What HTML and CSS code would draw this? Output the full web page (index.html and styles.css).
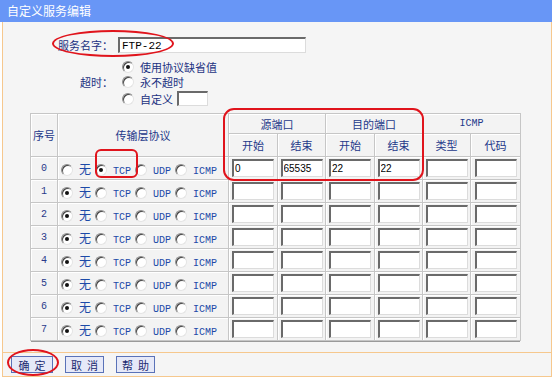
FILE: index.html
```html
<!DOCTYPE html>
<html lang="zh">
<head>
  <meta charset="UTF-8">
  <title>自定义服务编辑</title>
  <link rel="stylesheet" href="styles.css">
</head>
<body>
  <div class="window">
    <div class="title">自定义服务编辑</div>
    <div class="panel">
      <div class="form">
        <div class="name-row">
          <span class="label">服务名字：</span>
          <input type="text" class="name-input" value="FTP-22">
        </div>
        <div class="timeout">
          <span class="label timeout-label">超时：</span>
          <div class="opt opt1"><input type="radio" class="radio" name="to" checked>使用协议缺省值</div>
          <div class="opt opt2"><input type="radio" class="radio" name="to">永不超时</div>
          <div class="opt opt3"><input type="radio" class="radio" name="to">自定义 <input type="text" class="small-input"></div>
        </div>
      </div>

      <div class="table-wrap">
        <table class="svc">
          <colgroup>
            <col style="width:27px"><col style="width:171px">
            <col style="width:49px"><col style="width:48px">
            <col style="width:49px"><col style="width:48px">
            <col style="width:48px"><col style="width:50px">
          </colgroup>
          <tr class="h1">
            <th rowspan="2">序号</th>
            <th rowspan="2">传输层协议</th>
            <th colspan="2">源端口</th>
            <th colspan="2">目的端口</th>
            <th colspan="2" class="mono">ICMP</th>
          </tr>
          <tr class="h2">
            <th>开始</th><th>结束</th><th>开始</th><th>结束</th><th>类型</th><th>代码</th>
          </tr>
          <tr>
            <td class="num">0</td>
            <td class="proto"><input type="radio" class="radio" name="p0"><span class="cn">无</span><input type="radio" class="radio" name="p0" checked><span class="en">TCP</span><input type="radio" class="radio" name="p0"><span class="en">UDP</span><input type="radio" class="radio" name="p0"><span class="en">ICMP</span></td>
            <td><input type="text" class="cell-input" value="0"></td>
            <td><input type="text" class="cell-input" value="65535"></td>
            <td><input type="text" class="cell-input" value="22"></td>
            <td><input type="text" class="cell-input" value="22"></td>
            <td><input type="text" class="cell-input"></td>
            <td><input type="text" class="cell-input"></td>
          </tr>
          <tr>
            <td class="num">1</td>
            <td class="proto"><input type="radio" class="radio" name="p1" checked><span class="cn">无</span><input type="radio" class="radio" name="p1"><span class="en">TCP</span><input type="radio" class="radio" name="p1"><span class="en">UDP</span><input type="radio" class="radio" name="p1"><span class="en">ICMP</span></td>
            <td><input type="text" class="cell-input"></td><td><input type="text" class="cell-input"></td>
            <td><input type="text" class="cell-input"></td><td><input type="text" class="cell-input"></td>
            <td><input type="text" class="cell-input"></td><td><input type="text" class="cell-input"></td>
          </tr>
          <tr>
            <td class="num">2</td>
            <td class="proto"><input type="radio" class="radio" name="p2" checked><span class="cn">无</span><input type="radio" class="radio" name="p2"><span class="en">TCP</span><input type="radio" class="radio" name="p2"><span class="en">UDP</span><input type="radio" class="radio" name="p2"><span class="en">ICMP</span></td>
            <td><input type="text" class="cell-input"></td><td><input type="text" class="cell-input"></td>
            <td><input type="text" class="cell-input"></td><td><input type="text" class="cell-input"></td>
            <td><input type="text" class="cell-input"></td><td><input type="text" class="cell-input"></td>
          </tr>
          <tr>
            <td class="num">3</td>
            <td class="proto"><input type="radio" class="radio" name="p3" checked><span class="cn">无</span><input type="radio" class="radio" name="p3"><span class="en">TCP</span><input type="radio" class="radio" name="p3"><span class="en">UDP</span><input type="radio" class="radio" name="p3"><span class="en">ICMP</span></td>
            <td><input type="text" class="cell-input"></td><td><input type="text" class="cell-input"></td>
            <td><input type="text" class="cell-input"></td><td><input type="text" class="cell-input"></td>
            <td><input type="text" class="cell-input"></td><td><input type="text" class="cell-input"></td>
          </tr>
          <tr>
            <td class="num">4</td>
            <td class="proto"><input type="radio" class="radio" name="p4" checked><span class="cn">无</span><input type="radio" class="radio" name="p4"><span class="en">TCP</span><input type="radio" class="radio" name="p4"><span class="en">UDP</span><input type="radio" class="radio" name="p4"><span class="en">ICMP</span></td>
            <td><input type="text" class="cell-input"></td><td><input type="text" class="cell-input"></td>
            <td><input type="text" class="cell-input"></td><td><input type="text" class="cell-input"></td>
            <td><input type="text" class="cell-input"></td><td><input type="text" class="cell-input"></td>
          </tr>
          <tr>
            <td class="num">5</td>
            <td class="proto"><input type="radio" class="radio" name="p5" checked><span class="cn">无</span><input type="radio" class="radio" name="p5"><span class="en">TCP</span><input type="radio" class="radio" name="p5"><span class="en">UDP</span><input type="radio" class="radio" name="p5"><span class="en">ICMP</span></td>
            <td><input type="text" class="cell-input"></td><td><input type="text" class="cell-input"></td>
            <td><input type="text" class="cell-input"></td><td><input type="text" class="cell-input"></td>
            <td><input type="text" class="cell-input"></td><td><input type="text" class="cell-input"></td>
          </tr>
          <tr>
            <td class="num">6</td>
            <td class="proto"><input type="radio" class="radio" name="p6" checked><span class="cn">无</span><input type="radio" class="radio" name="p6"><span class="en">TCP</span><input type="radio" class="radio" name="p6"><span class="en">UDP</span><input type="radio" class="radio" name="p6"><span class="en">ICMP</span></td>
            <td><input type="text" class="cell-input"></td><td><input type="text" class="cell-input"></td>
            <td><input type="text" class="cell-input"></td><td><input type="text" class="cell-input"></td>
            <td><input type="text" class="cell-input"></td><td><input type="text" class="cell-input"></td>
          </tr>
          <tr>
            <td class="num">7</td>
            <td class="proto"><input type="radio" class="radio" name="p7" checked><span class="cn">无</span><input type="radio" class="radio" name="p7"><span class="en">TCP</span><input type="radio" class="radio" name="p7"><span class="en">UDP</span><input type="radio" class="radio" name="p7"><span class="en">ICMP</span></td>
            <td><input type="text" class="cell-input"></td><td><input type="text" class="cell-input"></td>
            <td><input type="text" class="cell-input"></td><td><input type="text" class="cell-input"></td>
            <td><input type="text" class="cell-input"></td><td><input type="text" class="cell-input"></td>
          </tr>
        </table>
      </div>
    </div>
    <div class="footer">
      <button class="btn btn-ok">确定</button>
      <button class="btn">取消</button>
      <button class="btn">帮助</button>
    </div>

    <!-- red annotation marks -->
    <div class="mark ellipse mark-name"></div>
    <div class="mark box mark-tcp"></div>
    <div class="mark box mark-ports"></div>
    <div class="mark ellipse mark-ok"></div>
  </div>
</body>
</html>
```

FILE: styles.css
```css
body {
  margin: 0;
  background: #fff;
  font-family: "Noto Sans CJK SC", "Liberation Sans", sans-serif;
  font-size: 11px;
  color: #1c3282;
}

.window {
  position: relative;
  width: 552px;
}

.title {
  height: 22px;
  line-height: 21px;
  padding-left: 7px;
  background: #6896f6;
  color: #fff;
  font-size: 12px;
}

.panel {
  margin-left: 2px;
  border-left: 1px solid #f6c88e;
  border-right: 1px solid #f6c88e;
  border-bottom: 1px solid #f6c88e;
  background: #f5f5f5;
  padding-top: 15px;
  padding-bottom: 11px;
}

.form {
  display: flex;
  flex-direction: column;
}

.label {
  width: 110px;
  text-align: right;
  color: #1c3282;
}

.name-row {
  display: flex;
  align-items: center;
  height: 16px;
  gap: 5px;
}

.name-input {
  box-sizing: border-box;
  width: 188px;
  height: 16px;
  margin: 0;
  padding: 0 2px;
  background: #fff;
  border-top: 2px solid #6a6a6a;
  border-left: 2px solid #6a6a6a;
  border-right: 1px solid #dcdcdc;
  border-bottom: 1px solid #dcdcdc;
  font-family: "Liberation Mono", monospace;
  font-size: 11px;
  color: #000;
}

.timeout {
  display: grid;
  grid-template-columns: 110px auto;
  grid-template-rows: 15px 16px 17px;
  margin-top: 6px;
}

.timeout-label {
  grid-column: 1;
  grid-row: 2;
  align-self: center;
}

.opt {
  grid-column: 2;
  display: flex;
  align-items: center;
  padding-left: 9px;
  color: #1c3282;
}

.opt1 { grid-row: 1; }
.opt2 { grid-row: 2; }
.opt3 { grid-row: 3; }

.small-input {
  box-sizing: border-box;
  width: 31px;
  height: 15px;
  margin: 0 0 0 4px;
  padding: 0;
  background: #fff;
  border-top: 2px solid #6a6a6a;
  border-left: 2px solid #6a6a6a;
  border-right: 1px solid #dcdcdc;
  border-bottom: 1px solid #dcdcdc;
}

.radio {
  appearance: none;
  -webkit-appearance: none;
  box-sizing: border-box;
  width: 12px;
  height: 12px;
  margin: 0 6px 0 0;
  border-radius: 50%;
  border: 1px solid #8c8c8c;
  border-bottom-color: #e4e4e4;
  border-right-color: #e4e4e4;
  background: #fff;
  box-shadow: inset 1px 1px 0 #444;
  position: relative;
  flex: none;
}

.radio:checked::after {
  content: "";
  position: absolute;
  left: 3px;
  top: 3px;
  width: 4px;
  height: 4px;
  border-radius: 50%;
  background: #111;
}

.table-wrap {
  margin: 6px 0 0 27px;
  width: 489px;
  box-shadow: 1px 1px 0 #9a9a9a;
}

.svc {
  width: 489px;
  table-layout: fixed;
  border-collapse: collapse;
  background: #f3f3f3;
}

.svc th,
.svc td {
  border: 1px solid #c6c6c6;
  box-shadow: inset 1px 1px 0 #fff;
  padding: 0;
  text-align: center;
  font-weight: normal;
  color: #24398a;
}

.svc tr { height: 23px; }
.svc tr.h1 { height: 20px; }

.svc .mono,
.en {
  font-family: "Liberation Mono", monospace;
  font-size: 10px;
}

.svc td.num {
  font-family: "Liberation Mono", monospace;
  font-size: 10px;
  color: #2a3a8a;
}

.svc td.proto {
  text-align: left;
  padding-left: 3px;
}

.proto .radio {
  vertical-align: -2px;
}

.cn {
  display: inline-block;
  width: 11px;
  margin-right: 5px;
  font-size: 12px;
  color: #1c4aa8;
}

.en {
  display: inline-block;
  margin-right: 4px;
  color: #1c4aa8;
}

.cell-input {
  box-sizing: border-box;
  display: block;
  width: 42px;
  height: 18px;
  margin: 0 auto;
  padding: 0 1px;
  background: #fff;
  border-top: 2px solid #6a6a6a;
  border-left: 2px solid #6a6a6a;
  border-right: 1px solid #dcdcdc;
  border-bottom: 1px solid #dcdcdc;
  font-family: "Liberation Sans", sans-serif;
  font-size: 10px;
  color: #000;
}

.footer {
  margin-left: 2px;
  height: 23px;
  border-left: 1px solid #f6c88e;
  border-right: 1px solid #f6c88e;
  border-bottom: 1px solid #f6c88e;
  background: #f5f5f5;
  display: flex;
  align-items: center;
  gap: 12px;
  padding-left: 8px;
}

.btn {
  box-sizing: border-box;
  height: 17px;
  width: 39px;
  padding: 0 0 0 5px;
  border: 1px solid #5a72b8;
  background: #e6e9f8;
  font-family: "Noto Sans CJK SC", sans-serif;
  font-size: 11px;
  line-height: 14px;
  letter-spacing: 5px;
  white-space: nowrap;
  color: #1c2a70;
  text-align: center;
}

.btn-ok {
  width: 42px;
}

.mark {
  position: absolute;
  box-sizing: border-box;
  border: 2px solid #e0141c;
}

.ellipse {
  border-radius: 50%;
}

.box {
  border-radius: 8px;
}

.mark-name {
  left: 52px;
  top: 30px;
  width: 122px;
  height: 27px;
}

.mark-tcp {
  left: 95px;
  top: 149px;
  width: 43px;
  height: 29px;
  border-radius: 6px;
}

.mark-ports {
  left: 223px;
  top: 108px;
  width: 201px;
  height: 73px;
  border-radius: 11px;
}

.mark-ok {
  left: 7px;
  top: 349px;
  width: 52px;
  height: 27px;
}
```
